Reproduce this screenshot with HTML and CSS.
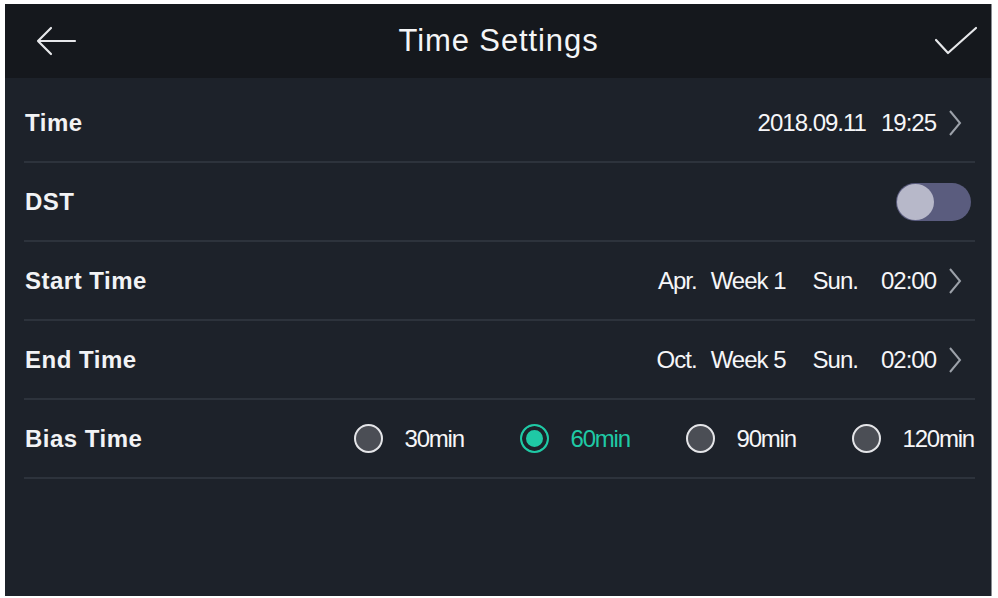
FILE: index.html
```html
<!DOCTYPE html>
<html>
<head>
    <meta charset="UTF-8">
    <title>Time Settings</title>
    <link rel="stylesheet" href="styles.css">
</head>
<body>
    <div class="screen">
        <header class="topbar">
            <svg class="icon-back" width="42" height="30" viewBox="0 0 42 30">
                <path d="M40 15 H3 M16 2 L3 15 L16 28" fill="none" stroke="#e6e7ea" stroke-width="2.2" stroke-linecap="round" stroke-linejoin="round"/>
            </svg>
            <h1>Time Settings</h1>
            <svg class="icon-ok" width="44" height="30" viewBox="0 0 44 30">
                <path d="M2 14 L14 27 L42 2" fill="none" stroke="#e6e7ea" stroke-width="2.2" stroke-linecap="round" stroke-linejoin="round"/>
            </svg>
        </header>

        <div class="settings">
            <div class="row">
                <span class="label">Time</span>
                <div class="value">
                    <span>2018.09.11</span>
                    <span class="gap-m">19:25</span>
                </div>
                <svg class="chevron" width="14" height="26" viewBox="0 0 14 26"><path d="M2 1 L12 13 L2 25" fill="none" stroke="#9ca1a9" stroke-width="2"/></svg>
            </div>
            <div class="row">
                <span class="label">DST</span>
                <div class="toggle"><div class="knob"></div></div>
            </div>
            <div class="row">
                <span class="label">Start Time</span>
                <div class="value">
                    <span>Apr.</span>
                    <span class="gap-s">Week 1</span>
                    <span class="gap-l">Sun.</span>
                    <span class="gap-m2">02:00</span>
                </div>
                <svg class="chevron" width="14" height="26" viewBox="0 0 14 26"><path d="M2 1 L12 13 L2 25" fill="none" stroke="#9ca1a9" stroke-width="2"/></svg>
            </div>
            <div class="row">
                <span class="label">End Time</span>
                <div class="value">
                    <span>Oct.</span>
                    <span class="gap-s">Week 5</span>
                    <span class="gap-l">Sun.</span>
                    <span class="gap-m2">02:00</span>
                </div>
                <svg class="chevron" width="14" height="26" viewBox="0 0 14 26"><path d="M2 1 L12 13 L2 25" fill="none" stroke="#9ca1a9" stroke-width="2"/></svg>
            </div>
            <div class="row">
                <span class="label">Bias Time</span>
                <div class="radios">
                    <div class="radio"><span class="dot"></span><span class="opt">30min</span></div>
                    <div class="radio checked"><span class="dot"></span><span class="opt">60min</span></div>
                    <div class="radio"><span class="dot"></span><span class="opt">90min</span></div>
                    <div class="radio"><span class="dot"></span><span class="opt">120min</span></div>
                </div>
            </div>
        </div>
    </div>
</body>
</html>
```

FILE: styles.css
```css
:root {
    --header-bg: #15181d;
    --body-bg: #1d222a;
    --line: #2d333c;
    --text: #f2f3f5;
    --accent: #1fc9a5;
}

* {
    box-sizing: border-box;
    margin: 0;
    padding: 0;
}

body {
    background: #ffffff;
    padding: 4px 6px 2px 5px;
    font-family: 'Liberation Sans', Arial, sans-serif;
    color: var(--text);
}

.screen {
    width: 987px;
    height: 592px;
    background: var(--body-bg);
    border-right: 1px solid #8a8d92;
}

.topbar {
    height: 74px;
    background: var(--header-bg);
    display: flex;
    align-items: center;
    padding: 0 13px 0 30px;
}

.topbar h1 {
    flex: 1;
    text-align: center;
    font-weight: 400;
    font-size: 31px;
    letter-spacing: 0.9px;
    color: #f4f5f7;
    margin-right: 14px;
}

.settings {
    padding: 6px 16px 0 19px;
}

.row {
    height: 79px;
    display: flex;
    align-items: center;
    border-bottom: 2px solid var(--line);
}

.label {
    font-weight: 700;
    font-size: 24px;
    letter-spacing: 0.5px;
    flex: 1;
    padding-left: 1px;
}

.value {
    display: flex;
    font-size: 24px;
    letter-spacing: -1px;
    color: #f6f6f8;
    margin-right: 12px;
}

.gap-s {
    margin-left: 14px;
}

.gap-m {
    margin-left: 15px;
}

.gap-m2 {
    margin-left: 23px;
}

.gap-l {
    margin-left: 27px;
}

.chevron {
    margin-right: 13px;
}

.toggle {
    width: 75px;
    height: 38px;
    border-radius: 19px;
    background: #5a5c7e;
    padding: 1px;
    margin-right: 4px;
}

.knob {
    width: 37px;
    height: 36px;
    border-radius: 50%;
    background: #b7b8c9;
}

.radios {
    display: flex;
    align-items: center;
    margin-right: 1px;
}

.radio {
    display: flex;
    align-items: center;
    width: 166px;
}

.radio:last-child {
    width: auto;
}

.dot {
    width: 29px;
    height: 29px;
    border-radius: 50%;
    border: 2.5px solid #e4e5e8;
    background: #4b4e55;
    margin-right: 21px;
}

.radio.checked .dot {
    border-color: var(--accent);
    background: var(--accent);
    box-shadow: inset 0 0 0 4px var(--body-bg);
}

.opt {
    font-size: 24px;
    letter-spacing: -1.2px;
    color: #f6f6f8;
}

.radio.checked .opt {
    color: var(--accent);
}
```
